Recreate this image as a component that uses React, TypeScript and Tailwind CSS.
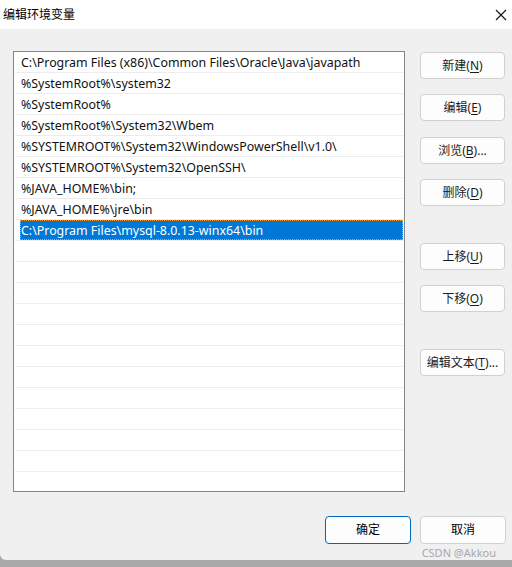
const FONT = "font-['Noto_Sans','Noto_Sans_CJK_SC',sans-serif]";

const PATHS = [
  "C:\\Program Files (x86)\\Common Files\\Oracle\\Java\\javapath",
  "%SystemRoot%\\system32",
  "%SystemRoot%",
  "%SystemRoot%\\System32\\Wbem",
  "%SYSTEMROOT%\\System32\\WindowsPowerShell\\v1.0\\",
  "%SYSTEMROOT%\\System32\\OpenSSH\\",
  "%JAVA_HOME%\\bin;",
  "%JAVA_HOME%\\jre\\bin",
];

const SELECTED = "C:\\Program Files\\mysql-8.0.13-winx64\\bin";
const EMPTY_ROWS = 11;

function Btn({ label, hotkey, suffix = "", className = "" }: { label: string; hotkey: string; suffix?: string; className?: string }) {
  return (
    <button
      type="button"
      className={`w-[85px] h-[27px] bg-[#fdfdfd] border border-[#d0d0d0] rounded-[4px] text-[12px] text-[#1b1b1b] flex items-center justify-center ${className}`}
    >
      {label}(<span className="underline underline-offset-2">{hotkey}</span>){suffix}
    </button>
  );
}

export default function App() {
  return (
    <div className={`w-[512px] h-[567px] bg-[#a9a9a9] flex flex-col ${FONT}`}>
      <div className="h-[560px] bg-[#f0f0f0] flex flex-col rounded-bl-[6px] overflow-hidden">
        {/* title bar */}
        <div className="h-[29px] bg-white flex items-center justify-between pl-[3px] pr-[3px]">
          <span className="text-[12px] text-black leading-none">编辑环境变量</span>
          <svg width="12" height="12" viewBox="0 0 12 12" className="mr-[2px]">
            <path d="M1 1 L11 11 M11 1 L1 11" stroke="#111" strokeWidth="1.1" />
          </svg>
        </div>

        <div className="flex pl-[13px] pt-[22px]">
          {/* list */}
          <div className="w-[392px] h-[441px] bg-white border border-[#82868c] px-[1px] overflow-hidden">
            {PATHS.map((p) => (
              <div key={p} className="h-[21px] border-b border-[#ececec] flex items-center pl-[6px] pt-[2px] text-[12.4px] text-[#111]">
                {p}
              </div>
            ))}
            <div className="h-[21px] border-b border-[#ececec] pl-[5px]">
              <div className="h-[20px] bg-[#0078d7] border border-dotted border-[#f39c32] flex items-center pt-[2px] text-[12.4px] text-white">
                {SELECTED}
              </div>
            </div>
            {Array.from({ length: EMPTY_ROWS }).map((_, i) => (
              <div key={i} className="h-[21px] border-b border-[#ececec]" />
            ))}
          </div>

          {/* side buttons */}
          <div className="flex flex-col ml-[15px] pt-[1px]">
            <Btn label="新建" hotkey="N" />
            <Btn label="编辑" hotkey="E" className="mt-[15px]" />
            <Btn label="浏览" hotkey="B" suffix="..." className="mt-[16px]" />
            <Btn label="删除" hotkey="D" className="mt-[15px]" />
            <Btn label="上移" hotkey="U" className="mt-[37px]" />
            <Btn label="下移" hotkey="O" className="mt-[15px]" />
            <Btn label="编辑文本" hotkey="T" suffix="..." className="mt-[37px]" />
          </div>
        </div>

        {/* footer */}
        <div className="flex justify-end gap-[9px] pr-[6px] mt-[24px]">
          <button type="button" className="w-[86px] h-[28px] bg-[#fdfdfd] border border-[#0067c0] rounded-[4px] text-[12px] text-black">
            确定
          </button>
          <button type="button" className="w-[86px] h-[28px] bg-[#fdfdfd] border border-[#d0d0d0] rounded-[4px] text-[12px] text-black">
            取消
          </button>
        </div>
        <div className="flex justify-end pr-[16px] mt-[3px]">
          <span className="text-[11px] text-[#a8a8a8] leading-none">CSDN @Akkou</span>
        </div>
      </div>
    </div>
  );
}
